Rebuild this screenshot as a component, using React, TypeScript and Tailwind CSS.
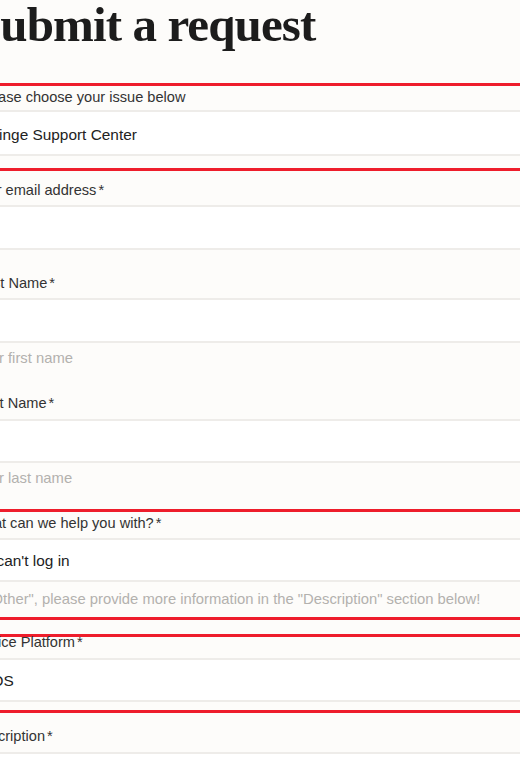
import type React from 'react'

const sans = "font-['Liberation_Sans',Arial,sans-serif]"

function RedRule() {
  return <div className="h-[3px] bg-[#ee1d2b]" />
}

function Label({
  children,
  className,
  shift = 'ml-[-5px]',
}: {
  children: React.ReactNode
  className: string
  shift?: string
}) {
  return (
    <div className={`flex items-end text-[14.6px] leading-5 text-[#333] ${className}`}>
      <span className={`whitespace-nowrap ${shift}`}>
        {children}
        <span className="ml-[2px]">*</span>
      </span>
    </div>
  )
}

function Field({ value, className = 'h-[45px]' }: { value?: string; className?: string }) {
  return (
    <div className={`flex items-center border-y-2 border-[#eeece9] bg-white pl-[11px] text-[15.4px] text-[#222] ${className}`}>
      {value}
    </div>
  )
}

function Hint({ children, className }: { children: React.ReactNode; className: string }) {
  return (
    <div className={`text-[14.8px] leading-5 text-[#b3b1ae] whitespace-nowrap ${className}`}>
      <div className="ml-[-3px]">{children}</div>
    </div>
  )
}

export default function App() {
  return (
    <div className={`min-h-screen overflow-hidden bg-[#fdfcfa] ${sans}`}>
      <div className="ml-[-23px] w-[calc(100%+23px)]">
        {/* heading */}
        <div className="h-[83px]">
          <h1 className="ml-[-3px] font-['Liberation_Serif','Times_New_Roman',serif] text-[49px] font-bold leading-none tracking-[-0.9px] text-[#1c1c1c]">
            Submit a request
          </h1>
        </div>

        <RedRule />
        <div className="flex h-[24px] items-end pb-[3px] text-[14.6px] leading-5 text-[#333]">
          Please choose your issue below
        </div>
        <Field value="Hinge Support Center" className="h-[46px] pt-[3px]" />
        <div className="h-[12px]" />

        <RedRule />
        <Label className="h-[34px] pb-[5px]">Your email address</Label>
        <Field />

        <Label className="h-[48px] pb-[5px]" shift="ml-[-1px]">First Name</Label>
        <Field />
        <Hint className="h-[40px] pt-[5px]">Your first name</Hint>

        <Label className="h-[36px] pb-[6px]" shift="ml-[-1px]">Last Name</Label>
        <Field className="h-[44px]" />
        <Hint className="h-[46px] pt-[5px]">Your last name</Hint>

        <RedRule />
        <Label className="h-[26px] pb-[5px]">What can we help you with?</Label>
        <Field value="I can't log in" className="h-[44px] pt-[2px]" />
        <Hint className="h-[35px] pt-[7px]">
          If "Other", please provide more information in the "Description" section below!
        </Hint>

        <RedRule />
        <div className="h-[14px]" />
        <RedRule />
        <Label className="h-[21px] pb-[6px]">Device Platform</Label>
        <Field value="iOS" className="h-[44px] pt-[2px]" />
        <div className="h-[8px]" />

        <RedRule />
        <Label className="h-[39px] pb-[6px]">Description</Label>
        <div className="h-[120px] border-t-2 border-[#eeece9] bg-white" />
      </div>
    </div>
  )
}
